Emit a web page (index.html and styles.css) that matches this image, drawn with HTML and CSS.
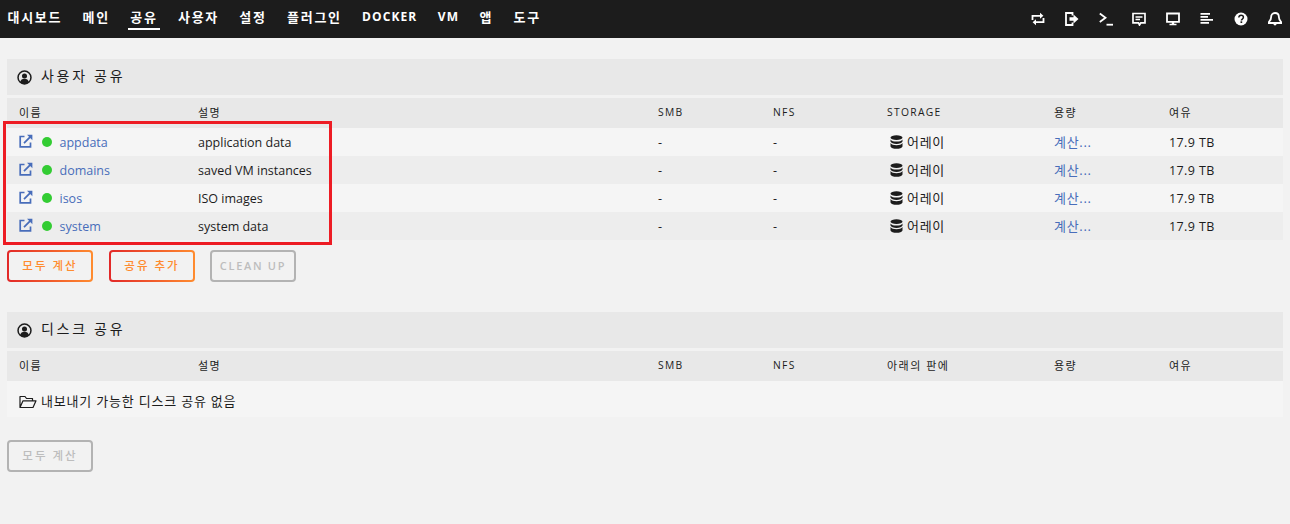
FILE: index.html
```html
<!DOCTYPE html>
<html lang="ko">
<head>
<meta charset="utf-8">
<title>공유</title>
<link rel="stylesheet" href="styles.css">
</head>
<body>
<svg class="defs" width="0" height="0" aria-hidden="true">
  <symbol id="ext" viewBox="0 0 14 14"><path d="M5.500 2.500H1.200v10.300h10.300V8.500" fill="none" stroke="currentColor" stroke-width="1.700"/><path d="M5 9.200 12 2.200" fill="none" stroke="currentColor" stroke-width="1.700"/><path d="M8 .8h5.400v5.400z" fill="currentColor"/></symbol>
  <symbol id="db" viewBox="0 0 13 14"><ellipse cx="6.500" cy="2.600" rx="6" ry="2.400" fill="currentColor"/><path d="M.5 4.400c1 1.600 3.200 2.200 6 2.200s5-.6 6-2.200v2.200c-.6 1.600-3 2.400-6 2.400s-5.400-.8-6-2.400zM.5 8c1 1.600 3.200 2.200 6 2.200s5-.6 6-2.200v3.400C12 13 9.500 13.800 6.500 13.800S1 13 .5 11.400z" fill="currentColor"/></symbol>
  <symbol id="user" viewBox="0 0 16 16"><circle cx="8" cy="8" r="6.900" fill="none" stroke="currentColor" stroke-width="1.600"/><circle cx="8" cy="6.300" r="2.700" fill="currentColor"/><path d="M3.300 13c.5-2.600 2.300-3.700 4.700-3.700s4.200 1.100 4.700 3.700c-1.200 1.100-2.900 1.800-4.700 1.800s-3.500-.7-4.700-1.800z" fill="currentColor"/></symbol>
</svg>

<header class="topbar">
  <nav class="menu">
    <a class="menu-item">대시보드</a>
    <a class="menu-item">메인</a>
    <a class="menu-item active">공유</a>
    <a class="menu-item">사용자</a>
    <a class="menu-item">설정</a>
    <a class="menu-item">플러그인</a>
    <a class="menu-item latin-item">DOCKER</a>
    <a class="menu-item latin-item">VM</a>
    <a class="menu-item">앱</a>
    <a class="menu-item">도구</a>
  </nav>
  <div class="tools">
    <svg class="tool" viewBox="0 0 14 14"><path d="M1.500 8V3.800h8.500M12.500 6v4.200H4" fill="none" stroke="currentColor" stroke-width="1.800"/><path d="M9 .8l3.400 3-3.400 3zM5 7.200l-3.400 3 3.400 3z" fill="currentColor"/></svg>
    <svg class="tool" viewBox="0 0 14 14"><path d="M7.500 3.500V1H1v12h6.500v-2.500" fill="none" stroke="currentColor" stroke-width="1.800"/><path d="M4.500 5.300H8.500V2.500L13.500 7l-5 4.500V8.700H4.500z" fill="currentColor"/></svg>
    <svg class="tool" viewBox="0 0 14 14"><path d="M.8 1.500 6.500 5.800.8 10" fill="none" stroke="currentColor" stroke-width="1.800"/><path d="M7.500 11.800h6.500v1.800H7.500z" fill="currentColor"/></svg>
    <svg class="tool" viewBox="0 0 14 14"><path d="M1 1.500h12v9.300H8.800L7.500 13l-1-2.200H1z" fill="none" stroke="currentColor" stroke-width="1.700"/><path d="M3.500 4.300h7v1.500h-7zM3.500 6.800h4.500v1.500H3.500z" fill="currentColor"/></svg>
    <svg class="tool" viewBox="0 0 14 14"><path d="M1 1.500h12v8.300H1z" fill="none" stroke="currentColor" stroke-width="1.800"/><path d="M5.800 10h2.400v1.800h2.300v1.500h-7v-1.500h2.300z" fill="currentColor"/></svg>
    <svg class="tool" viewBox="0 0 14 14"><path d="M.5 1h9.500v1.800H.5zM.5 4h7.500v1.800H.5zM.5 7h12.500v1.800H.5zM.5 10h8.500v1.800H.5z" fill="currentColor"/></svg>
    <svg class="tool" viewBox="0 0 14 14"><circle cx="7" cy="7" r="6.500" fill="currentColor"/><path d="M4.800 5.500C4.900 4.100 5.800 3.300 7.100 3.300c1.300 0 2.300.8 2.300 2 0 1.800-2 1.700-2 3.200" fill="none" stroke="#1c1c1c" stroke-width="1.500"/><path d="M6.500 9.300h1.700V11H6.500z" fill="#1c1c1c"/></svg>
    <svg class="tool" viewBox="0 0 14 14"><path d="M7 1c2.600 0 3.900 2 3.900 4.200 0 2.300.9 3.500 2.300 4.900v.9H.8v-.9c1.400-1.400 2.300-2.600 2.300-4.900C3.100 3 4.400 1 7 1z" fill="none" stroke="currentColor" stroke-width="1.800"/><path d="M5.300 11.500h3.400C8.500 12.800 7.900 13.500 7 13.500s-1.500-.7-1.700-2z" fill="currentColor"/></svg>
  </div>
</header>

<main class="page">
  <section class="panel">
    <h2 class="title"><svg class="title-icon"><use href="#user"/></svg>사용자 공유</h2>
    <div class="row head">
      <span>이름</span><span>설명</span><span class="latin">SMB</span><span class="latin">NFS</span><span class="latin">STORAGE</span><span>용량</span><span>여유</span>
    </div>
    <div class="row item">
      <span class="name"><svg class="ext"><use href="#ext"/></svg><i class="dot"></i><a>appdata</a></span><span>application data</span><span>-</span><span>-</span><span class="store"><svg class="db"><use href="#db"/></svg><span class="ko">어레이</span></span><a class="ko">계산...</a><span class="num">17.9 TB</span>
    </div>
    <div class="row item">
      <span class="name"><svg class="ext"><use href="#ext"/></svg><i class="dot"></i><a>domains</a></span><span>saved VM instances</span><span>-</span><span>-</span><span class="store"><svg class="db"><use href="#db"/></svg><span class="ko">어레이</span></span><a class="ko">계산...</a><span class="num">17.9 TB</span>
    </div>
    <div class="row item">
      <span class="name"><svg class="ext"><use href="#ext"/></svg><i class="dot"></i><a>isos</a></span><span>ISO images</span><span>-</span><span>-</span><span class="store"><svg class="db"><use href="#db"/></svg><span class="ko">어레이</span></span><a class="ko">계산...</a><span class="num">17.9 TB</span>
    </div>
    <div class="row item">
      <span class="name"><svg class="ext"><use href="#ext"/></svg><i class="dot"></i><a>system</a></span><span>system data</span><span>-</span><span>-</span><span class="store"><svg class="db"><use href="#db"/></svg><span class="ko">어레이</span></span><a class="ko">계산...</a><span class="num">17.9 TB</span>
    </div>
    <div class="actions">
      <button class="btn">모두 계산</button>
      <button class="btn">공유 추가</button>
      <button class="btn off latin-btn">CLEAN UP</button>
    </div>
    <div class="callout"></div>
  </section>

  <section class="panel second">
    <h2 class="title"><svg class="title-icon"><use href="#user"/></svg>디스크 공유</h2>
    <div class="row head">
      <span>이름</span><span>설명</span><span class="latin">SMB</span><span class="latin">NFS</span><span>아래의 판에</span><span>용량</span><span>여유</span>
    </div>
    <div class="empty">
      <svg class="folder" viewBox="0 0 18 14"><path d="M1 12.500V1.500h5l1.500 2h6v2.300M1 12.500 4 5.800h13l-3 6.700z" fill="none" stroke="currentColor" stroke-width="1.200" stroke-linejoin="round"/></svg>내보내기 가능한 디스크 공유 없음
    </div>
    <div class="actions lower">
      <button class="btn off">모두 계산</button>
    </div>
  </section>
</main>
</body>
</html>
```

FILE: styles.css
```css
* { box-sizing: border-box; }
html, body { margin: 0; height: 100%; }
body {
  background: #f2f2f2;
  color: #1c1c1c;
  font-family: "Open Sans", "Noto Sans CJK KR", sans-serif;
  font-size: 12.500px;
  overflow: hidden;
}
.defs { position: absolute; }

.topbar {
  height: 38px;
  background: #1c1c1c;
  color: #fff;
  display: flex;
  justify-content: space-between;
  padding: 0 8px 0 5.500px;
}
.menu { display: flex; gap: 16.400px; }
.menu-item {
  height: 30px;
  padding: 0 2px;
  line-height: 34px;
  font-size: 13px;
  font-weight: 600;
  letter-spacing: 1.700px;
  white-space: nowrap;
}
.menu-item.latin-item { font-size: 12px; font-weight: 700; letter-spacing: 1.100px; }
.menu-item.active { border-bottom: 2px solid #fff; }
.tools { display: flex; gap: 19.900px; align-items: center; height: 38px; }
.tool { width: 14px; height: 14px; color: #fff; display: block; }

.page { padding: 21px 7px 0; }
.panel { position: relative; }
.second { margin-top: 30px; }

.title {
  height: 36px;
  margin: 0 0 3px;
  padding: 0 0 5px 10px;
  background: #e8e8e8;
  display: flex;
  align-items: center;
  font-size: 14px;
  font-weight: 400;
  letter-spacing: 2.700px;
}
.title-icon { width: 15px; height: 15px; margin: 5px 9px 0 0; }

.row {
  display: grid;
  grid-template-columns: 179px 460px 115px 114px 167px 115px 1fr;
  align-items: center;
  padding-left: 12px;
  white-space: nowrap;
}
.head {
  height: 30px;
  padding-bottom: 2px;
  background: #e8e8e8;
  font-size: 11px;
  letter-spacing: 1.500px;
}
.head .latin { letter-spacing: 1.300px; font-size: 10.300px; }
.item { height: 28px; background: #f5f5f5; }
.item:nth-of-type(odd) { background: #ededed; }
.item a { color: #486dba; }
.name { display: flex; align-items: center; }
.ext { width: 14px; height: 14px; color: #486dba; margin: -3px 9px 0 -0.500px; }
.dot { width: 10px; height: 10px; border-radius: 50%; background: #33cc33; margin-right: 8px; }
.store { display: flex; align-items: center; }
.db { width: 13px; height: 14px; margin: 0 4px 0 3px; }
.ko { font-size: 13px; letter-spacing: .700px; margin-bottom: 2px; }
.num { letter-spacing: .400px; }

.actions { display: flex; gap: 16px; margin-top: 10px; }
.lower { margin-top: 23px; }
.btn {
  width: 86px;
  height: 32px;
  padding: 0 0 2px;
  border: 2px solid transparent;
  border-radius: 4px;
  background: linear-gradient(#f2f2f2, #f2f2f2) padding-box, linear-gradient(90deg, #e22828, #ff8c2f) border-box;
  color: #ff8c2f;
  font: 500 11.500px "Open Sans", "Noto Sans CJK KR", sans-serif;
  letter-spacing: 2px;
}
.btn.off {
  background: none;
  border-color: #b3b3b3;
  color: #bdbdbd;
}
.btn.latin-btn { margin-left: -1px; font-size: 11px; font-weight: 600; letter-spacing: 1.700px; }

.empty {
  height: 36px;
  background: #f5f5f5;
  padding: 3px 0 0 12px;
  display: flex;
  align-items: center;
  font-size: 13px;
  letter-spacing: .800px;
}
.folder { width: 18px; height: 14px; margin: 2px 4px 0 0; }

.callout {
  position: absolute;
  left: -4px;
  top: 62px;
  width: 329px;
  height: 124px;
  border: 3px solid #ed1c24;
  pointer-events: none;
}
```
